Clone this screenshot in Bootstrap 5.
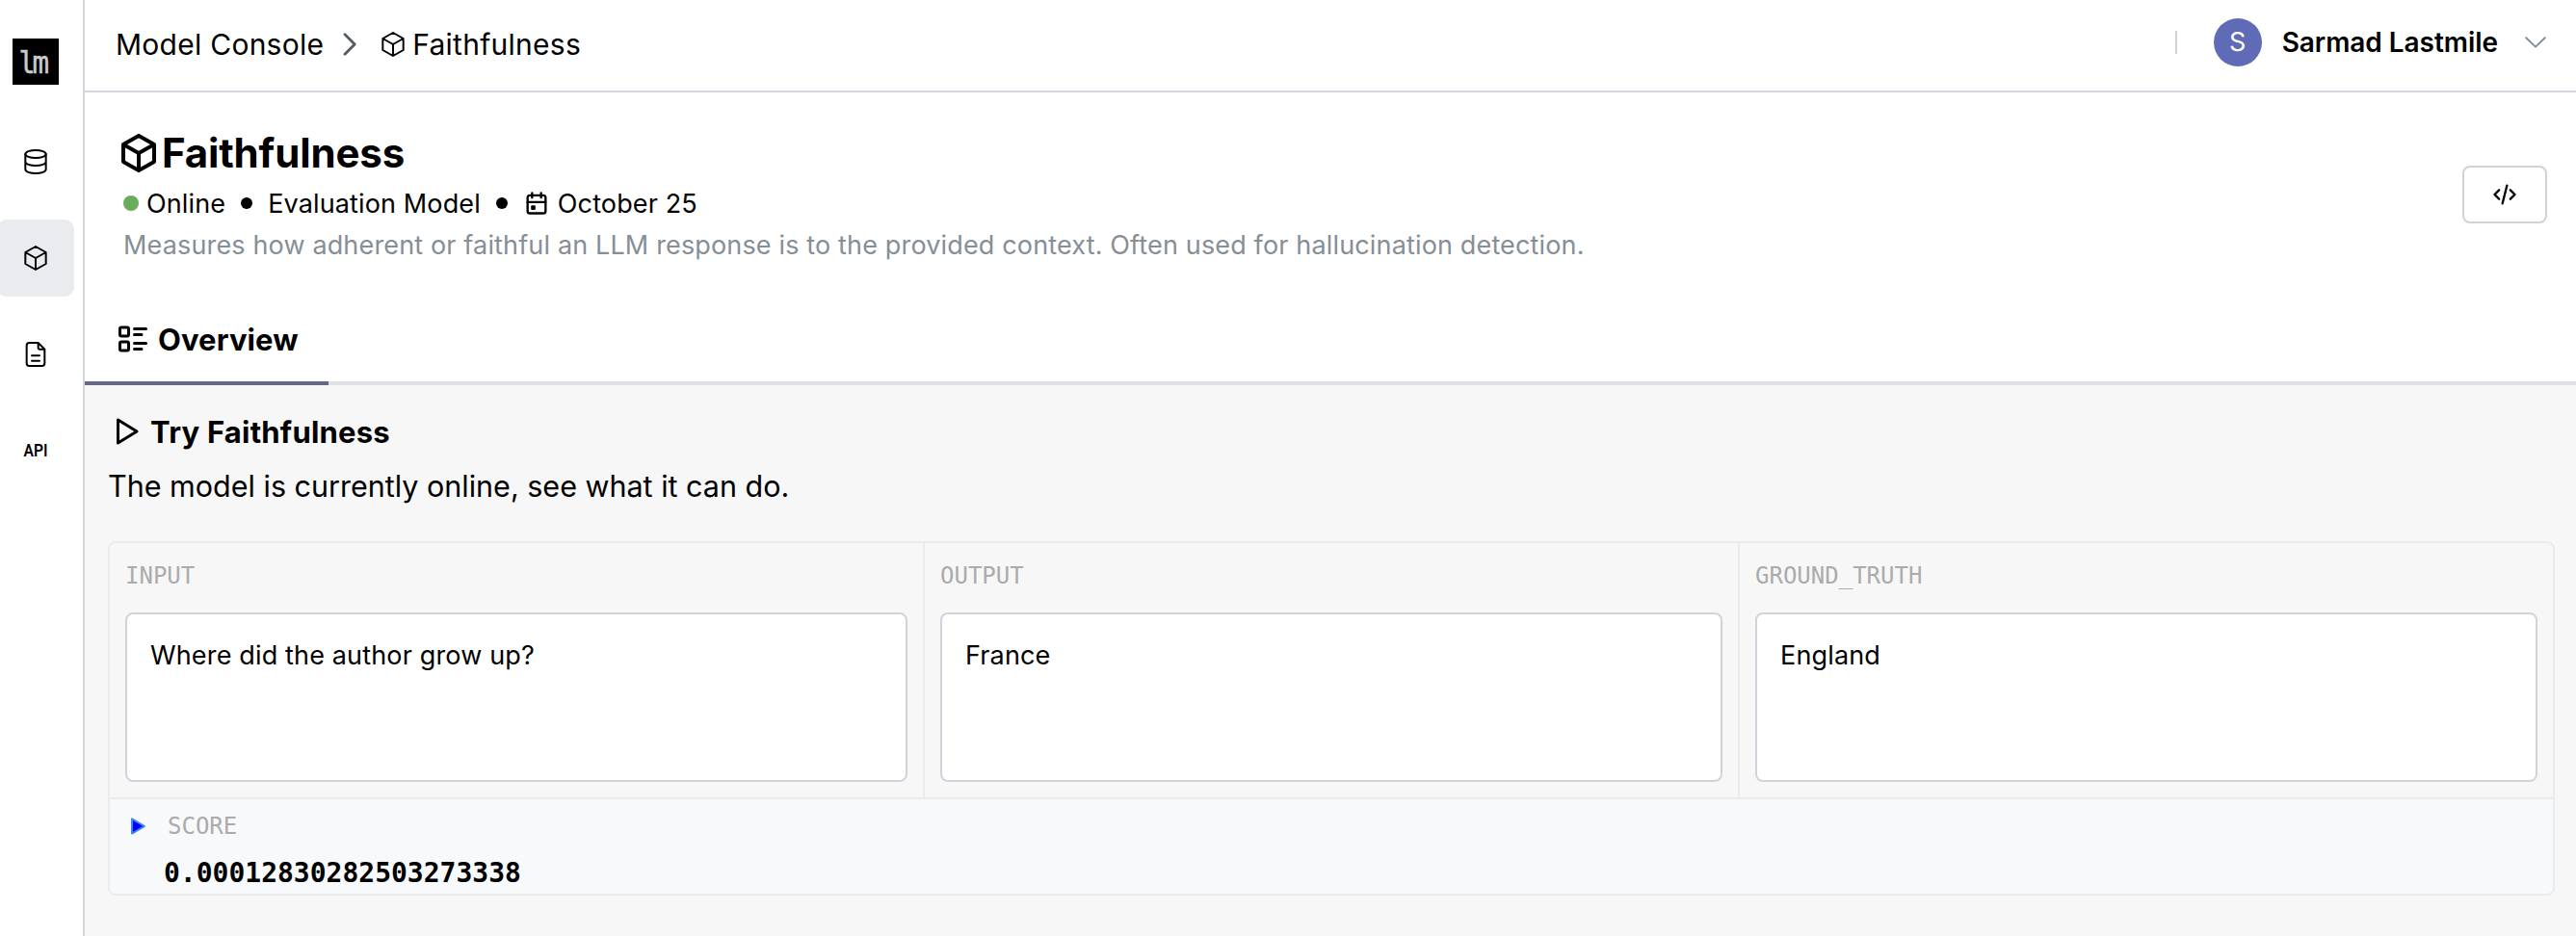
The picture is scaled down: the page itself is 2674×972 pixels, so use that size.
<!DOCTYPE html>
<html lang="en">
<head>
<meta charset="utf-8">
<title>Model Console</title>
<link href="https://cdn.jsdelivr.net/npm/bootstrap@5.3.0/dist/css/bootstrap.min.css" rel="stylesheet">
<style>
body{font-family:Inter,"Liberation Sans",sans-serif;color:#000;background:#f7f7f7;height:972px;overflow:hidden;line-height:1.5}
.ico{fill:none;stroke:currentColor;stroke-width:2;stroke-linecap:round;stroke-linejoin:round;display:block;flex:none}
.ico.thin{stroke-width:1.5}
.side{width:88px;flex:none;border-right:2px solid #d4d7dd;background:#fff;padding-top:40px}
.logo{display:block;margin:0 0 40px 13px}
.side-link{width:80px;height:80px;margin:0 0 20px -3px;border-radius:10px;padding-left:24px;color:#000}
.side-link.active{background:#eaebef}
.topbar{height:96px;border-bottom:2px solid #d3d7dd;background:#fff;padding:0 31px 0 32px}
.crumb{font-size:30px;letter-spacing:.26px;padding-bottom:2px}
.account{padding-bottom:6px}
.chev{margin:0 22px 0 20px;color:#555b63}
.divider{width:2px;height:24px;background:#ced4da;margin-right:38px}
.avatar{width:50px;height:50px;background:#606bb8;color:#fff;font-size:27px}
.user{font-size:28px;font-weight:600;margin:0 28px 0 21px;letter-spacing:-.05px}
.hero{background:#fff;height:304px}
.hero-main{padding:33px 30px 0 32px}
.title{font-size:42px;font-weight:700;height:60px;line-height:60px;letter-spacing:-.15px;margin:0}
.meta{font-size:27px;height:40px;line-height:40px;letter-spacing:.13px;margin:2px 0 4px;padding-left:8px}
.meta .word{padding-top:2px}
.desc{font-size:27px;line-height:40px;letter-spacing:.15px;color:#868e96;margin:0;padding-left:8px}
.online{width:16px;height:16px;background:#69ad5c;margin-right:8px}
.dot{width:12px;height:12px;background:#000;margin:0 16px}
.code-btn{width:88px;height:60px;border:2px solid #ced4da;border-radius:8px;background:#fff;color:#000}
.tabs-row{height:92px;box-shadow:inset 0 -4px #dee2e6}
.tab-on{width:253px;border-bottom:4px solid #666882;font-size:31px;font-weight:650;letter-spacing:.1px;padding-left:32px;gap:8px;color:#000}
.try{font-size:31px;font-weight:650;height:48px;line-height:48px;gap:8px;letter-spacing:.22px;margin:0}
.tab-on span,.try span{padding-top:2px}
.work{padding:24px 22px 0 24px}
.sub{font-size:30.5px;line-height:46px;margin:10px 0 34px}
.panel{border:2px solid #e9ebee;border-radius:8px;overflow:hidden}
.cell{padding:16px;height:264px;flex:0 0 846px;border-right:2px solid #e9ebee}
.cell:last-child{border-right:0;flex:1 1 0}
.lab{font-family:"DejaVu Sans Mono",monospace;color:#ababab;font-size:24px;line-height:36px}
.field{height:176px;border:2px solid #ced4da;border-radius:8px;background:#fff;padding:23px 24px;font-size:27px;line-height:40px;letter-spacing:.15px;margin-top:20px}
.score{background:#f8f9fb;border-top:2px solid #e9ebee;height:100px;padding:10px 0 0 22px}
.score .lab{gap:23px}
.num{font-family:"DejaVu Sans Mono",monospace;font-weight:700;font-size:28px;line-height:36px;padding-left:34px;margin-top:13px}
</style>
</head>
<body class="d-flex">
<svg width="0" height="0" class="position-absolute">
  <symbol id="box" viewBox="0 0 24 24"><path d="M12 3l8 4.5v9L12 21l-8-4.5v-9L12 3M12 12l8-4.5M12 12v9M12 12L4 7.5"/></symbol>
</svg>

<nav class="side">
  <svg class="logo" width="48" height="48" viewBox="0 0 48 48"><rect width="48" height="48" fill="#000"/><g font-family="DejaVu Sans Mono" font-size="31.5" fill="#ccc" stroke="#ccc" stroke-width=".5"><text x="6.6" y="36" textLength="17" lengthAdjust="spacingAndGlyphs">l</text><text x="20.6" y="36" textLength="17.6" lengthAdjust="spacingAndGlyphs">m</text></g></svg>
  <a class="side-link d-flex align-items-center" href="#" aria-label="Datasets"><svg class="ico thin" width="32" height="32" viewBox="0 0 24 24"><ellipse cx="12" cy="6" rx="8" ry="3"/><path d="M4 6v6c0 1.66 3.58 3 8 3s8-1.34 8-3V6M4 12v6c0 1.66 3.58 3 8 3s8-1.34 8-3v-6"/></svg></a>
  <a class="side-link active d-flex align-items-center" href="#" aria-label="Models"><svg class="ico thin" width="32" height="32"><use href="#box"/></svg></a>
  <a class="side-link d-flex align-items-center" href="#" aria-label="Documents"><svg class="ico thin" width="32" height="32" viewBox="0 0 24 24"><path d="M14 3v4a1 1 0 0 0 1 1h4M17 21H7a2 2 0 0 1-2-2V5a2 2 0 0 1 2-2h7l5 5v11a2 2 0 0 1-2 2zM9 17h6M9 13h6"/></svg></a>
  <a class="side-link d-flex align-items-center" href="#"><svg width="32" height="32" viewBox="0 0 32 32"><text x="3.6" y="22" font-family="Roboto" font-weight="600" font-size="17.5" textLength="25" lengthAdjust="spacingAndGlyphs">API</text></svg></a>
</nav>

<main class="flex-grow-1">
  <header class="topbar d-flex align-items-center justify-content-between">
    <div class="crumb d-flex align-items-center">
      <span>Model Console</span>
      <svg class="ico chev" width="14" height="24" viewBox="0 0 14 24"><path d="M2 1.8L12.2 12 2 22.2" style="stroke-width:2.8"/></svg>
      <svg class="ico thin" width="32" height="32"><use href="#box"/></svg>
      <span class="ms-1">Faithfulness</span>
    </div>
    <div class="account d-flex align-items-center">
      <span class="divider"></span>
      <span class="avatar rounded-circle d-flex align-items-center justify-content-center">S</span>
      <span class="user">Sarmad Lastmile</span>
      <svg class="ico" width="22" height="12" viewBox="0 0 22 12" color="#868e96"><path d="M1.2 1.2L11 10.6l9.8-9.4"/></svg>
    </div>
  </header>

  <section class="hero d-flex flex-column justify-content-between">
    <div class="hero-main d-flex align-items-center justify-content-between">
      <div>
        <h1 class="title d-flex align-items-center"><svg class="ico" width="48" height="48"><use href="#box"/></svg><span>Faithfulness</span></h1>
        <div class="meta d-flex align-items-center">
          <span class="online rounded-circle"></span><span class="word">Online</span>
          <span class="dot rounded-circle"></span><span class="word">Evaluation Model</span>
          <span class="dot rounded-circle"></span>
          <svg class="ico me-2" width="28" height="28" viewBox="0 0 24 24"><rect x="4" y="5" width="16" height="16" rx="2"/><path d="M16 3v4M8 3v4M4 11h16M8 15h2v2H8z"/></svg>
          <span class="word">October 25</span>
        </div>
        <p class="desc">Measures how adherent or faithful an LLM response is to the provided context. Often used for hallucination detection.</p>
      </div>
      <button class="code-btn btn p-0 d-flex align-items-center justify-content-center" aria-label="View code"><svg class="ico" width="28" height="28" viewBox="0 0 24 24"><path d="M7 8l-4 4 4 4M17 8l4 4-4 4M14 4l-4 16"/></svg></button>
    </div>
    <div class="tabs-row d-flex">
      <a class="tab-on d-flex align-items-center text-decoration-none" href="#"><svg class="ico" width="36" height="36" viewBox="0 0 24 24"><path d="M13 5h8M13 9h5M13 15h8M13 19h5"/><rect x="3" y="4" width="6" height="6" rx="1"/><rect x="3" y="14" width="6" height="6" rx="1"/></svg><span>Overview</span></a>
    </div>
  </section>

  <section class="work">
    <h2 class="try d-flex align-items-center"><svg class="ico" width="36" height="36" viewBox="0 0 24 24"><path d="M7 4v16l13-8z"/></svg><span>Try Faithfulness</span></h2>
    <p class="sub">The model is currently online, see what it can do.</p>
    <div class="panel">
      <div class="d-flex">
        <div class="cell"><div class="lab">INPUT</div><div class="field">Where did the author grow up?</div></div>
        <div class="cell"><div class="lab">OUTPUT</div><div class="field">France</div></div>
        <div class="cell"><div class="lab">GROUND_TRUTH</div><div class="field">England</div></div>
      </div>
      <div class="score">
        <div class="d-flex align-items-center lab"><svg width="15" height="18" viewBox="0 0 15 18"><path d="M1 1.4v15.2L14 9z" fill="#00f" stroke="#3f86e6" stroke-width="2" stroke-linejoin="round"/></svg><span>SCORE</span></div>
        <div class="num">0.00012830282503273338</div>
      </div>
    </div>
  </section>
</main>
<script src="https://cdn.jsdelivr.net/npm/bootstrap@5.3.0/dist/js/bootstrap.bundle.min.js"></script>
</body>
</html>
